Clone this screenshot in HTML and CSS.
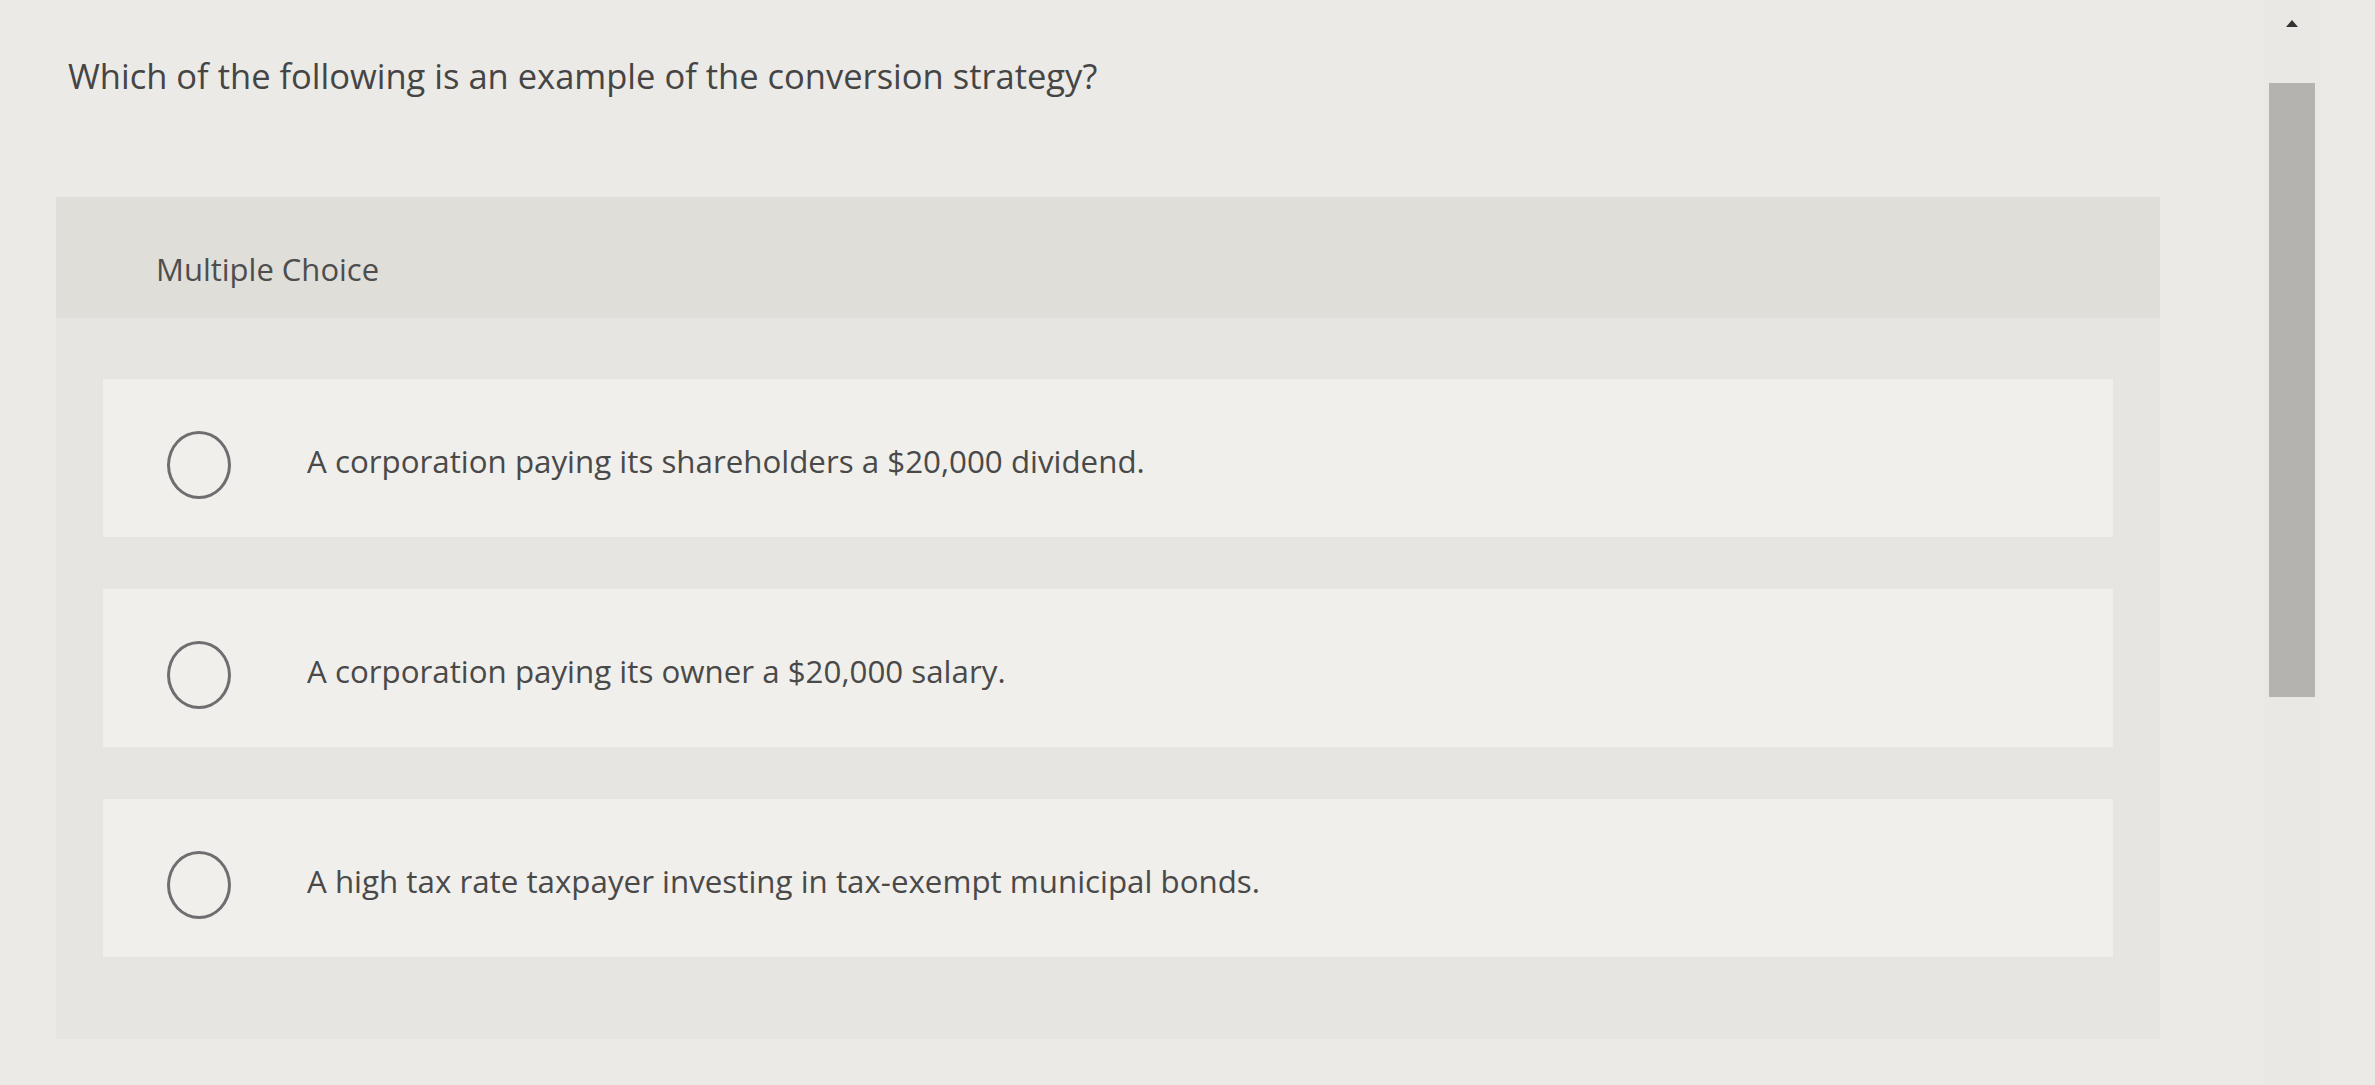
FILE: index.html
```html
<!DOCTYPE html>
<html lang="en">
<head>
<meta charset="utf-8">
<link rel="stylesheet" href="styles.css">
</head>
<body>
<div class="page">
  <main class="main">
    <p class="question">Which of the following is an example of the conversion strategy?</p>
    <section class="panel">
      <div class="panel-head">Multiple Choice</div>
      <div class="options">
        <label class="option"><span class="radio"></span><span class="opt-text">A corporation paying its shareholders a $20,000 dividend.</span></label>
        <label class="option"><span class="radio"></span><span class="opt-text">A corporation paying its owner a $20,000 salary.</span></label>
        <label class="option"><span class="radio"></span><span class="opt-text">A high tax rate taxpayer investing in tax-exempt municipal bonds.</span></label>
      </div>
    </section>
  </main>
  <aside class="scrollbar">
    <div class="arrow"></div>
    <div class="thumb"></div>
  </aside>
</div>
</body>
</html>
```

FILE: styles.css
```css
html, body {
  margin: 0;
  padding: 0;
  height: 100%;
}
body {
  background: #ebeae6;
  font-family: "Open Sans", "Liberation Sans", sans-serif;
  color: #4a4949;
  overflow: hidden;
}
.page {
  display: flex;
  height: 1085px;
}
.main {
  flex: 1;
  padding: 0 104px 0 56px;
}
.question {
  margin: 52px 0 0 12px;
  font-size: 34.5px;
  line-height: 48px;
  color: #464545;
}
.panel {
  margin-top: 97px;
}
.panel-head {
  background: #dfded9;
  height: 121px;
  box-sizing: border-box;
  padding-top: 22px;
  display: flex;
  align-items: center;
  padding-left: 100px;
  font-size: 31px;
  color: #4e4d4d;
}
.options {
  background: #e6e5e1;
  padding: 61px 47px 82px;
  display: flex;
  flex-direction: column;
  gap: 52px;
}
.option {
  background: #f0efeb;
  height: 158px;
  box-sizing: border-box;
  padding-top: 14px;
  display: flex;
  align-items: center;
  padding-left: 64px;
}
.radio {
  width: 58px;
  height: 62px;
  border: 3px solid #6e6d6f;
  border-radius: 50%;
  flex: none;
}
.opt-text {
  margin-left: 76px;
  margin-top: -8px;
  font-size: 31.3px;
  color: #4a4949;
}
.scrollbar {
  width: 56px;
  margin-right: 55px;
  background: #e9e8e5;
  display: flex;
  flex-direction: column;
  align-items: center;
}
.arrow {
  margin-top: 20px;
  width: 0;
  height: 0;
  border-left: 6px solid transparent;
  border-right: 6px solid transparent;
  border-bottom: 7px solid #333;
}
.thumb {
  margin-top: 56px;
  width: 46px;
  height: 614px;
  background: #b4b3b0;
}
```
